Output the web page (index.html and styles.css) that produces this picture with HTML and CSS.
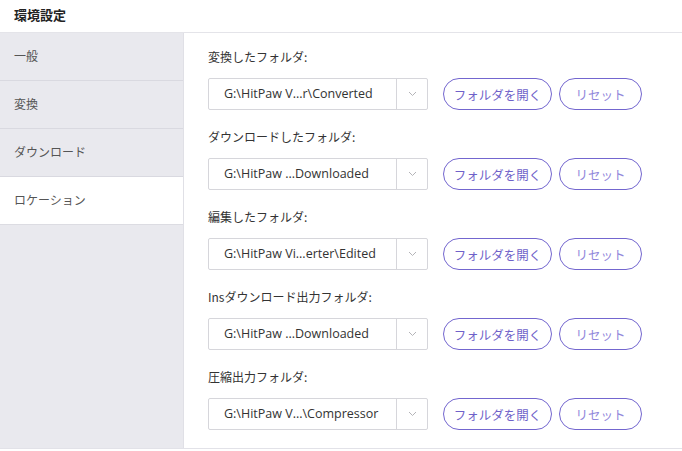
FILE: index.html
```html
<!DOCTYPE html>
<html lang="ja">
<head>
<meta charset="utf-8">
<title>環境設定</title>
<link rel="stylesheet" href="styles.css">
</head>
<body>
<div class="app">
  <div class="header">環境設定</div>
  <div class="main">
    <div class="sidebar">
      <div class="nav-item">一般</div>
      <div class="nav-item">変換</div>
      <div class="nav-item">ダウンロード</div>
      <div class="nav-item active">ロケーション</div>
    </div>
    <div class="content">
      <div class="row">
        <div class="label">変換したフォルダ:</div>
        <div class="controls">
          <div class="select"><span class="path">G:\HitPaw V...r\Converted</span><span class="arrow"><svg width="9" height="6" viewBox="0 0 9 6"><polyline points="1,1 4.5,4.5 8,1" fill="none" stroke="#b4b4b8" stroke-width="1"/></svg></span></div>
          <button class="btn open">フォルダを開く</button>
          <button class="btn reset">リセット</button>
        </div>
      </div>
      <div class="row">
        <div class="label">ダウンロードしたフォルダ:</div>
        <div class="controls">
          <div class="select"><span class="path">G:\HitPaw ...Downloaded</span><span class="arrow"><svg width="9" height="6" viewBox="0 0 9 6"><polyline points="1,1 4.5,4.5 8,1" fill="none" stroke="#b4b4b8" stroke-width="1"/></svg></span></div>
          <button class="btn open">フォルダを開く</button>
          <button class="btn reset">リセット</button>
        </div>
      </div>
      <div class="row">
        <div class="label">編集したフォルダ:</div>
        <div class="controls">
          <div class="select"><span class="path">G:\HitPaw Vi...erter\Edited</span><span class="arrow"><svg width="9" height="6" viewBox="0 0 9 6"><polyline points="1,1 4.5,4.5 8,1" fill="none" stroke="#b4b4b8" stroke-width="1"/></svg></span></div>
          <button class="btn open">フォルダを開く</button>
          <button class="btn reset">リセット</button>
        </div>
      </div>
      <div class="row">
        <div class="label">Insダウンロード出力フォルダ:</div>
        <div class="controls">
          <div class="select"><span class="path">G:\HitPaw ...Downloaded</span><span class="arrow"><svg width="9" height="6" viewBox="0 0 9 6"><polyline points="1,1 4.5,4.5 8,1" fill="none" stroke="#b4b4b8" stroke-width="1"/></svg></span></div>
          <button class="btn open">フォルダを開く</button>
          <button class="btn reset">リセット</button>
        </div>
      </div>
      <div class="row">
        <div class="label">圧縮出力フォルダ:</div>
        <div class="controls">
          <div class="select"><span class="path">G:\HitPaw V...\Compressor</span><span class="arrow"><svg width="9" height="6" viewBox="0 0 9 6"><polyline points="1,1 4.5,4.5 8,1" fill="none" stroke="#b4b4b8" stroke-width="1"/></svg></span></div>
          <button class="btn open">フォルダを開く</button>
          <button class="btn reset">リセット</button>
        </div>
      </div>
    </div>
  </div>
</div>
</body>
</html>
```

FILE: styles.css
```css
html, body {
  margin: 0;
  padding: 0;
  background: #ffffff;
}
body {
  font-family: "Noto Sans CJK JP", "Noto Sans", sans-serif;
  color: #333333;
}
.app {
  width: 682px;
  height: 451px;
  overflow: hidden;
}
.header {
  height: 32px;
  line-height: 30px;
  padding-left: 14px;
  font-size: 13px;
  font-weight: 700;
  color: #222222;
  border-bottom: 1px solid #e4e4e9;
}
.main {
  display: flex;
  height: 415px;
  border-bottom: 1px solid #e2e2e8;
}
.sidebar {
  width: 183px;
  background: #e9e9ee;
  border-right: 1px solid #e0e0e6;
}
.nav-item {
  height: 47px;
  line-height: 46px;
  padding-left: 14px;
  font-size: 12px;
  color: #555555;
  border-bottom: 1px solid #d9d9e0;
}
.nav-item.active {
  background: #ffffff;
  border-bottom-color: #dcdce2;
}
.content {
  flex: 1;
  padding-left: 24px;
  padding-top: 16px;
}
.row {
  height: 80px;
}
.label {
  height: 16px;
  line-height: 16px;
  font-size: 12px;
  color: #333333;
  margin-bottom: 13px;
}
.controls {
  display: flex;
  align-items: center;
  gap: 7px;
}
.select {
  box-sizing: border-box;
  width: 220px;
  height: 32px;
  border: 1px solid #d6d6db;
  border-radius: 2px;
  display: flex;
  margin-right: 8px;
}
.path {
  flex: 1;
  padding-left: 15px;
  line-height: 30px;
  font-family: "Open Sans", "Noto Sans", sans-serif;
  font-size: 12.5px;
  color: #333333;
  white-space: nowrap;
  overflow: hidden;
}
.arrow {
  width: 30px;
  border-left: 1px solid #d6d6db;
  display: flex;
  align-items: center;
  justify-content: center;
}
.btn {
  box-sizing: border-box;
  height: 32px;
  border: 1px solid #7366cf;
  border-radius: 16px;
  background: #ffffff;
  font-family: "Noto Sans CJK JP", sans-serif;
  font-size: 12.5px;
  padding: 0;
  cursor: pointer;
}
.btn.open {
  width: 109px;
  color: #6f62c9;
}
.btn.reset {
  width: 83px;
  color: #9187db;
}
```
